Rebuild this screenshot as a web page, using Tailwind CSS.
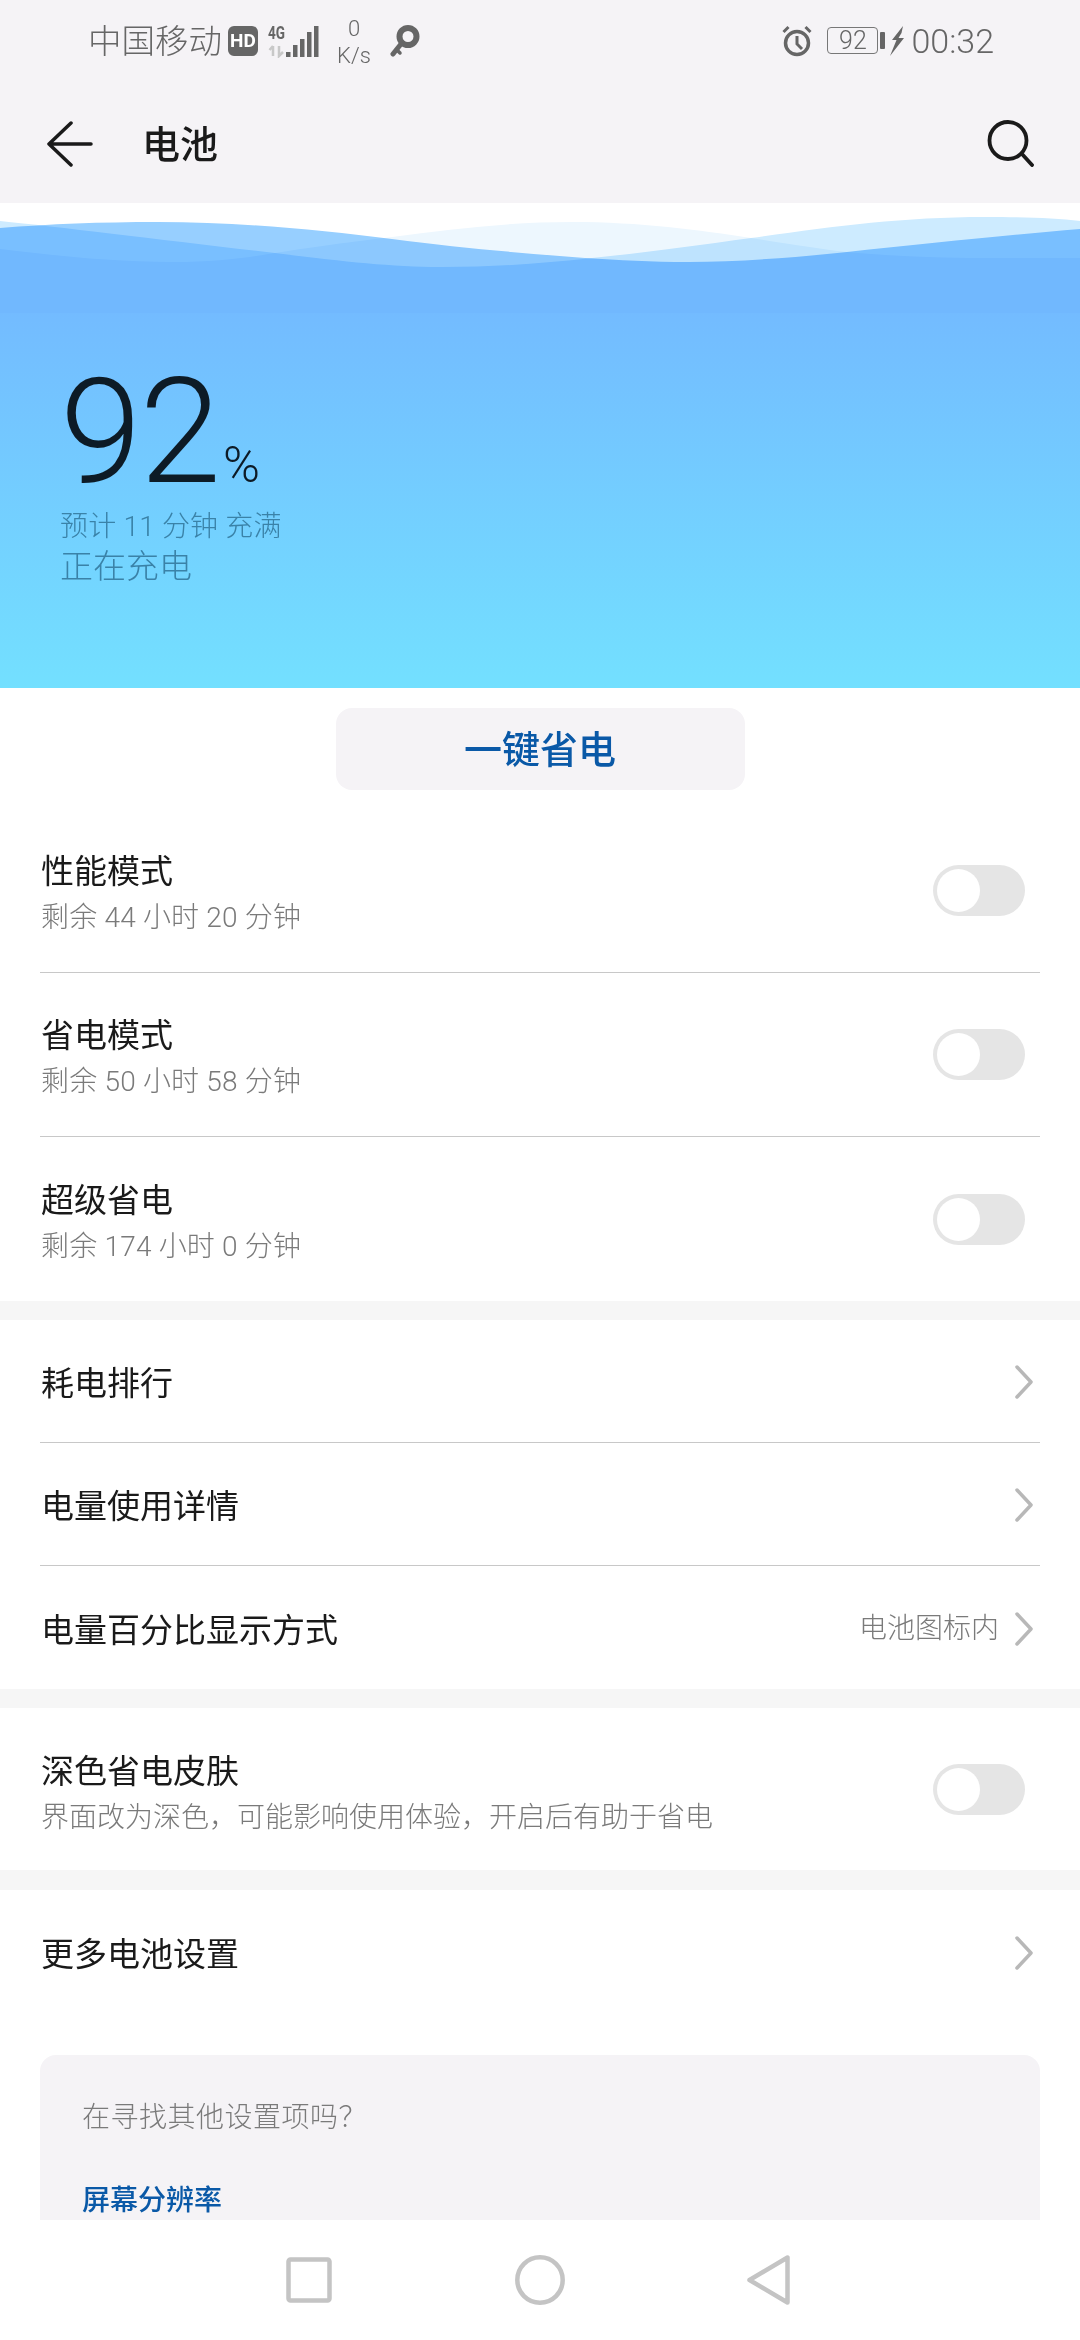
<!DOCTYPE html>
<html lang="zh">
<head>
    <meta charset="UTF-8">
    <meta name="viewport" content="width=device-width, initial-scale=1.0">
    <title>电池</title>
    <script src="https://cdn.jsdelivr.net/npm/@tailwindcss/browser@4"></script>
</head>
<body class="bg-white font-['Roboto','Noto_Sans_CJK_SC',sans-serif]">
<div class="w-[1080px] h-[2340px] flex flex-col overflow-hidden">

    <!-- status bar -->
    <div class="h-[84px] shrink-0 bg-[#f5f3f6] flex items-center text-[#666] pl-[88px] pr-[86px] pb-[3px]">
        <span class="text-[33.5px] leading-[40px] font-light mt-[3px]">中国移动</span>
        <span class="ml-[6px] w-[30px] h-[30px] rounded-[6px] bg-[#666] text-white text-[19px] font-bold leading-[30px] text-center">HD</span>
        <svg class="ml-[10px]" width="52" height="34" viewBox="0 0 52 34">
            <text x="0" y="15" font-size="19" font-weight="700" fill="#666" font-family="Roboto" textLength="17" lengthAdjust="spacingAndGlyphs">4G</text>
            <path d="M5 32V22M1.5 26L5 22M11 22v10l4-4" stroke="#c8c8c8" stroke-width="2.5" fill="none"/>
            <g fill="#666">
                <rect x="18" y="28" width="4.5" height="5"/>
                <rect x="25" y="21" width="4.5" height="12"/>
                <rect x="32" y="15" width="4.5" height="18"/>
                <rect x="39" y="8" width="4.5" height="25"/>
                <rect x="46" y="2" width="4.5" height="31"/>
            </g>
        </svg>
        <div class="ml-[16px] w-[36px] flex flex-col items-center text-[22px] leading-[27px] font-light pt-[3px]"><span>0</span><span>K/s</span></div>
        <svg class="ml-[18px]" width="30" height="32" viewBox="0 0 30 32" fill="none" stroke="#666" stroke-linecap="round">
            <circle cx="18" cy="11.5" r="8.5" stroke-width="6"/>
            <path d="M11 19L3 29" stroke-width="5"/>
            <path d="M7 25l3 3" stroke-width="3.5"/>
        </svg>
        <svg class="ml-auto" width="30" height="32" viewBox="0 0 30 32" fill="none" stroke="#666">
            <circle cx="15" cy="18" r="11.5" stroke-width="3.5"/>
            <path d="M15 11v8l5 5" stroke-width="3"/>
            <path d="M1.5 7l5-5M28.5 7l-5-5" stroke-width="3"/>
        </svg>
        <span class="ml-[15px] w-[51px] h-[27px] rounded-[4px] border border-[#777] text-[25px] font-light leading-[25px] text-center">92</span>
        <span class="ml-[2px] w-[5px] h-[17px] rounded-[1px] bg-[#666]"></span>
        <svg class="ml-[5px]" width="14" height="30" viewBox="0 0 14 30"><path d="M13 0L2 14h4.5L0 30l14-18H8.5l3-5z" fill="#666"/></svg>
        <span class="ml-[7px] text-[34px] leading-none font-light">00:32</span>
    </div>

    <!-- title bar -->
    <div class="h-[119px] shrink-0 bg-[#f5f3f6] flex items-center pl-[47px] pr-[46px]">
        <svg width="46" height="46" viewBox="0 0 46 46" fill="none" stroke="#1a1a1a" stroke-width="3.5" stroke-linecap="round" stroke-linejoin="round">
            <path d="M24 2L2 23l22 21M2 23h42"/>
        </svg>
        <span class="ml-[49px] mt-[2px] text-[38px] leading-none text-[#1a1a1a] font-medium">电池</span>
        <svg class="ml-auto" width="47" height="47" viewBox="0 0 47 47" fill="none" stroke="#1a1a1a" stroke-width="3.8" stroke-linecap="round">
            <circle cx="21" cy="20.5" r="18.5"/>
            <path d="M35 34l10 11"/>
        </svg>
    </div>

    <!-- battery hero -->
    <div class="h-[485px] shrink-0 relative bg-linear-to-b from-[#73baff] from-[20%] to-[#73e0ff] pt-[164px] pl-[60px]">
        <svg class="absolute top-0 left-0" width="1080" height="110" viewBox="0 0 1080 110">
            <rect width="1080" height="110" fill="#fff"/>
            <path class="mix-blend-multiply" fill="#edf7fe" d="M0 46C50 52 110 59 172 59C220 59 250 54 275 50C320 43 350 39 392 34C450 26 510 19 572 19C640 19 700 27 751 35C790 41 820 46 847 49C890 53 940 55 985 55C1020 55 1050 55 1080 55V110H0Z"/>
            <path class="mix-blend-multiply" fill="#cdebff" d="M0 18C60 24 170 38 275 50C340 58 390 64 441 64C500 64 545 60 592 55C650 49 700 42 751 35C830 24 900 14 985 14C1025 14 1055 15 1080 18V110H0Z"/>
            <path class="mix-blend-multiply" fill="#97cfff" d="M0 25C50 21 100 19 158 19C240 19 320 27 392 36C460 45 520 50 585 55C620 57 650 59 689 59C740 59 800 54 847 49C930 40 1010 32 1080 26V110H0Z"/>
        </svg>
        <div class="relative">
            <div class="flex items-baseline h-[130px] text-[#0d1b26]">
                <span class="text-[147px] leading-[130px] font-light tracking-[-2px]">92</span>
                <span class="ml-[4px] text-[50px] leading-none font-light">%</span>
            </div>
            <p class="mt-[14px] text-[28px] leading-[32px] tracking-[0.2px] font-light text-[#3a82a8]">预计 11 分钟 充满</p>
            <p class="mt-[6px] text-[33px] leading-[36px] font-light text-[#3a82a8]">正在充电</p>
        </div>
    </div>

    <!-- one tap button -->
    <div class="h-[121px] shrink-0 flex items-center justify-center">
        <div class="w-[409px] h-[82px] rounded-[16px] bg-[#f5f3f6] flex items-center justify-center text-[38px] font-medium text-[#0a59a7]"><span class="mt-[3px]">一键省电</span></div>
    </div>

    <!-- modes -->
    <div class="px-[40px] shrink-0">
        <div class="h-[164px] border-b border-[#c8c8c8] flex items-center">
            <div class="flex-1 pt-[5px] pl-[1px]"><p class="text-[33px] leading-[44px] text-[#1a1a1a]">性能模式</p><p class="text-[28px] leading-[36px] tracking-[0.2px] font-light text-[#7a7a7a] mt-[6px]">剩余 44 小时 20 分钟</p></div>
            <div class="w-[92px] h-[51px] rounded-full bg-[#e5e5e5] p-[4px] mr-[15px]"><div class="w-[43px] h-[43px] rounded-full bg-white"></div></div>
        </div>
        <div class="h-[164px] border-b border-[#c8c8c8] flex items-center">
            <div class="flex-1 pt-[5px] pl-[1px]"><p class="text-[33px] leading-[44px] text-[#1a1a1a]">省电模式</p><p class="text-[28px] leading-[36px] tracking-[0.2px] font-light text-[#7a7a7a] mt-[6px]">剩余 50 小时 58 分钟</p></div>
            <div class="w-[92px] h-[51px] rounded-full bg-[#e5e5e5] p-[4px] mr-[15px]"><div class="w-[43px] h-[43px] rounded-full bg-white"></div></div>
        </div>
        <div class="h-[164px] flex items-center">
            <div class="flex-1 pt-[5px] pl-[1px]"><p class="text-[33px] leading-[44px] text-[#1a1a1a]">超级省电</p><p class="text-[28px] leading-[36px] tracking-[0.2px] font-light text-[#7a7a7a] mt-[6px]">剩余 174 小时 0 分钟</p></div>
            <div class="w-[92px] h-[51px] rounded-full bg-[#e5e5e5] p-[4px] mr-[15px]"><div class="w-[43px] h-[43px] rounded-full bg-white"></div></div>
        </div>
    </div>

    <div class="h-[19px] shrink-0 bg-[#f6f6f6]"></div>

    <!-- links -->
    <div class="px-[40px] shrink-0">
        <div class="h-[123px] border-b border-[#c8c8c8] flex items-center justify-between pl-[1px] text-[33px] text-[#1a1a1a]">
            <span class="mt-[6px]">耗电排行</span>
            <svg class="mr-[7px] mt-[2px]" width="18" height="34" viewBox="0 0 18 34" fill="none" stroke="#b8b8b8" stroke-width="3.5" stroke-linecap="round" stroke-linejoin="round"><path d="M2 2l14 15L2 32"/></svg>
        </div>
        <div class="h-[123px] border-b border-[#c8c8c8] flex items-center justify-between pl-[1px] text-[33px] text-[#1a1a1a]">
            <span class="mt-[6px]">电量使用详情</span>
            <svg class="mr-[7px] mt-[2px]" width="18" height="34" viewBox="0 0 18 34" fill="none" stroke="#b8b8b8" stroke-width="3.5" stroke-linecap="round" stroke-linejoin="round"><path d="M2 2l14 15L2 32"/></svg>
        </div>
        <div class="h-[123px] flex items-center pl-[1px] text-[33px] text-[#1a1a1a]">
            <span class="mt-[6px]">电量百分比显示方式</span>
            <span class="ml-auto mt-[2px] text-[28px] font-light text-[#7a7a7a]">电池图标内</span>
            <svg class="ml-[16px] mr-[7px] mt-[2px]" width="18" height="34" viewBox="0 0 18 34" fill="none" stroke="#b8b8b8" stroke-width="3.5" stroke-linecap="round" stroke-linejoin="round"><path d="M2 2l14 15L2 32"/></svg>
        </div>
    </div>

    <div class="h-[19px] shrink-0 bg-[#f6f6f6]"></div>

    <div class="px-[40px] shrink-0">
        <div class="h-[162px] flex items-center">
            <div class="flex-1 pt-[8px] pl-[1px]"><p class="text-[33px] leading-[44px] text-[#1a1a1a]">深色省电皮肤</p><p class="text-[28px] leading-[36px] font-light text-[#7a7a7a] mt-[6px]">界面改为深色，可能影响使用体验，开启后有助于省电</p></div>
            <div class="w-[92px] h-[51px] rounded-full bg-[#e5e5e5] p-[4px] mr-[15px]"><div class="w-[43px] h-[43px] rounded-full bg-white"></div></div>
        </div>
    </div>

    <div class="h-[20px] shrink-0 bg-[#f6f6f6]"></div>

    <div class="px-[40px] shrink-0">
        <div class="h-[124px] flex items-center justify-between pl-[1px] text-[33px] text-[#1a1a1a]">
            <span class="mt-[6px]">更多电池设置</span>
            <svg class="mr-[7px] mt-[2px]" width="18" height="34" viewBox="0 0 18 34" fill="none" stroke="#b8b8b8" stroke-width="3.5" stroke-linecap="round" stroke-linejoin="round"><path d="M2 2l14 15L2 32"/></svg>
        </div>
    </div>

    <!-- search hint card, cut off by nav bar -->
    <div class="mx-[40px] mt-[41px] flex-1 min-h-0 overflow-hidden rounded-t-[16px] bg-[#f5f3f6] pl-[42px] pt-[45px]">
        <p class="text-[28px] leading-[36px] tracking-[0.5px] font-light text-[#7a7a7a]">在寻找其他设置项吗？</p>
        <p class="mt-[47px] text-[28px] leading-[36px] font-medium text-[#0a59a7]">屏幕分辨率</p>
    </div>

    <!-- nav bar -->
    <div class="h-[120px] shrink-0 bg-white flex items-center justify-center pr-[4px]">
        <svg width="46" height="46" viewBox="0 0 46 46" fill="none" stroke="#c4c4c4" stroke-width="4.5" stroke-linejoin="round"><rect x="2.5" y="2.5" width="41" height="41" rx="2"/></svg>
        <svg class="ml-[183px]" width="50" height="50" viewBox="0 0 50 50" fill="none" stroke="#c4c4c4" stroke-width="4.5"><circle cx="25" cy="25" r="22.7"/></svg>
        <svg class="ml-[182px]" width="43" height="50" viewBox="0 0 43 50" fill="none" stroke="#c4c4c4" stroke-width="4.5" stroke-linejoin="round"><path d="M40.5 2.5v45L2.5 25z"/></svg>
    </div>
</div>
</body>
</html>
